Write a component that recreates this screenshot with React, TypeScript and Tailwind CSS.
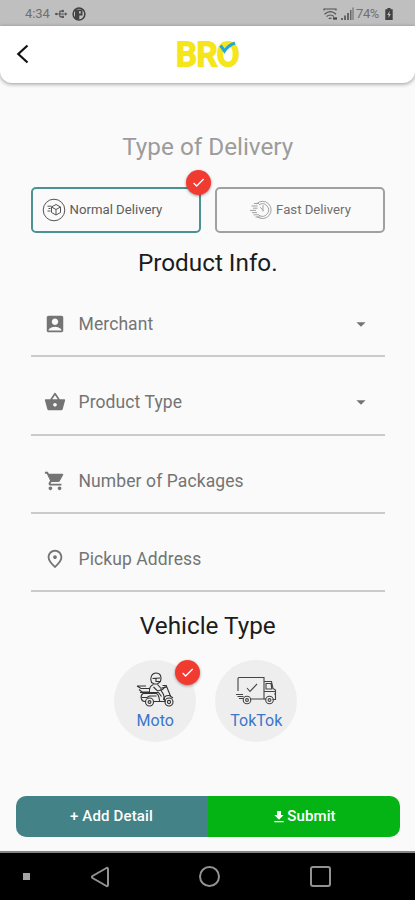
import { useState, ReactNode } from "react";
import {
  MdAccountBox,
  MdArrowDropDown,
  MdCheck,
  MdFileDownload,
  MdOutlinePlace,
  MdShoppingBasket,
  MdShoppingCart,
  MdUsb,
} from "react-icons/md";

function StatusBar() {
  return (
    <div className="flex h-[26px] items-center justify-between bg-[#bfbfbf] pl-[25px] pr-[22px] pt-px text-[13px] text-[#707070]">
      <div className="flex items-center">
        <span className="w-[26px] tracking-[-0.1px]">4:34</span>
        <MdUsb className="ml-[3px] size-[14px] rotate-90 text-[#555]" />
        <svg viewBox="0 0 14 14" className="ml-1 size-[14px]">
          <circle cx="7" cy="7" r="5.9" fill="none" stroke="#3f3f3f" strokeWidth="1.5" />
          <path d="M3 2.5h7.5v6H7.3v4H3z" fill="#444" />
          <path d="M7 4.2h1.8v2.4H7z" fill="#bfbfbf" />
        </svg>
      </div>
      <div className="flex items-center">
        <svg viewBox="0 0 16 14" className="h-[14px] w-4" fill="none" stroke="#505050" strokeWidth="1.2">
          <path d="M1 3.5V2h12v1.5M1.5 7.2q6-5 11.5 0M3.6 9.5q3.7-3 7.2 0M5.8 11.7q1.5-1.2 2.7 0" />
          <path d="M10 10.4h4v2.2h-4z" fill="#444" stroke="none" />
        </svg>
        <svg viewBox="0 0 13 13" className="ml-[2px] h-[13px] w-[13px]" fill="#666">
          <path d="M0 11h2v2H0zM3 8.5h2V13H3zM6 6h2v7H6zM9 3h1.5v10H9zM11.5.5h1V13h-1z" />
        </svg>
        <span className="ml-[2px] w-[25px] tracking-[-0.4px]">74%</span>
        <svg viewBox="0 0 8 13" className="ml-[4px] h-[12px] w-2">
          <path d="M2.3 0h3.4v1.3H8V13H0V1.3h2.3z" fill="#414141" />
          <path d="M4.7 3 2 7.5h1.7L3.3 11 6 6.5H4.3z" fill="#bfbfbf" />
        </svg>
      </div>
    </div>
  );
}

function Header() {
  return (
    <header className="relative flex h-[57px] items-center justify-center rounded-b-xl bg-white shadow-[0_1px_4px_rgba(0,0,0,0.4)]">
      <button className="absolute left-[16px] top-[18px]" aria-label="Back">
        <svg viewBox="0 0 14 20" className="h-5 w-[14px]" fill="none" stroke="#111" strokeWidth="2.2">
          <path d="M11.5 1.5 2.3 10l9.2 8.5" />
        </svg>
      </button>
      <div className="relative flex h-[28px] w-[64px] items-center justify-center">
        <span className="text-[33px] font-medium leading-[28px] tracking-[-0.5px] text-[#f5e51b] [-webkit-text-stroke:2px_#f5e51b] [stroke-linejoin:round]">
          BRO
        </span>
        <svg
          viewBox="0 0 18 13"
          className="absolute right-[3px] top-0 h-[13px] w-[18px]"
          fill="none"
          stroke="#20a8dc"
          strokeWidth="3"
        >
          <path d="M1.5 4.5 5.5 10Q9 4.5 16 2" />
        </svg>
      </div>
    </header>
  );
}

function CheckBadge({ className }: { className: string }) {
  return (
    <span
      className={`absolute flex size-[25px] items-center justify-center rounded-full bg-[#f23b30] text-white shadow-[0_1px_3px_rgba(0,0,0,0.4)] ${className}`}
    >
      <MdCheck className="size-[15px]" />
    </span>
  );
}

function BoxIcon() {
  return (
    <svg viewBox="0 0 24 24" className="size-6" fill="none" stroke="#555" strokeWidth="1">
      <circle cx="12" cy="12" r="10.8" />
      <path d="m9.5 9 4.5-2.5L18.5 9v5.5L14 17l-4.5-2.5z" />
      <path d="m9.5 9 4.5 2.5L18.5 9M14 11.5V17M5.5 8.2h4M6.5 10.5h2M5.5 13h3" />
    </svg>
  );
}

function FastIcon() {
  return (
    <svg viewBox="0 0 24 20" className="h-5 w-6" fill="none" stroke="#999" strokeWidth="0.9">
      <path d="M7.5 3.8A8.6 8.6 0 1 1 8 16.5" />
      <path d="M10 4.8a6.2 6.2 0 1 1 0 10.4M14 5v5.2l-2.8-3M13.2 10.8h1.6" />
      <path d="M5 3.5h5M2.5 6h6M4 8.2h4.5M1 10.4h6M3 12.6h5M4.5 14.8H10M6.5 17h5" />
    </svg>
  );
}

function ScooterIcon() {
  return (
    <svg viewBox="0 0 40 36" className="h-9 w-10" fill="none" stroke="#333" strokeWidth="1.1">
      <path d="M16.5 10.5C14.5 5.5 17 1 21 1c4.5 0 6 4 4.5 8.5l-3 2.5h-3zM17.5 6.5l7.5-.5M21 6.5v3h4" />
      <path d="M18.5 12.5c-3 1-4.5 4.2-4 8h9l3 4M18.5 15l4 4 5-1.5 3-3M22.5 12.5l4 4.5M2 14l4 2.5h8.5M4 17.5l3 2.5h7M2 14h9M5 20.5h9" />
      <path d="M8 21.5h13c1.8 0 2.3 1.5 2.8 3.5l1 4.5h5.2l-1.5-7-3-5M27.5 13.5h3.7l4.5 11M26.5 16l5.5-1M10.5 29.5C5.5 30 5 23.5 8 21.5M18.5 29.5h8M7 25.5h5l2.5-1.5h7" />
      <circle cx="14.5" cy="30" r="4" />
      <circle cx="14.5" cy="30" r="1.4" />
      <circle cx="34" cy="30" r="4" />
      <circle cx="34" cy="30" r="1.6" />
      <path d="M28.5 28q.5-5 6-4.5l3.5 2.5" />
    </svg>
  );
}

function TruckIcon() {
  return (
    <svg viewBox="0 0 42 30" className="h-[30px] w-[42px]" fill="none" stroke="#444" strokeWidth="1.1">
      <path d="M3 15V2.5Q3 1.5 4 1.5h25V23H15M12 12l3 3.5L22 8" />
      <path d="M29 5.5h7.5l1.5 7 2.5 1.5v9.5h-3M29 23h2M31 7.5h5l.8 5.5H31zM29 15.5h11.5M39 18h2M1 18.5h7M2.5 20.5h6M4 22.5h4" />
      <circle cx="12" cy="24" r="3.8" />
      <circle cx="12" cy="24" r="1.4" />
      <circle cx="34.5" cy="24" r="3.8" />
      <circle cx="34.5" cy="24" r="1.4" />
    </svg>
  );
}

interface FieldProps {
  icon: ReactNode;
  label: string;
  dropdown?: boolean;
}

function Field({ icon, label, dropdown }: FieldProps) {
  return (
    <div className="flex h-[78.3px] items-center border-b-2 border-[#cbcbcb] pl-[13px] pr-[13px] pt-[14px] text-[#747474]">
      <span className="text-[22px]">{icon}</span>
      <span className="ml-[13px] flex-1 text-[17.5px] tracking-[0.1px]">{label}</span>
      {dropdown && <MdArrowDropDown className="size-[22px]" />}
    </div>
  );
}

function App() {
  const [delivery, setDelivery] = useState("normal");
  const [vehicle, setVehicle] = useState("moto");

  const deliveryStyle =
    "relative flex h-[46px] w-[170px] items-center rounded-[5px] border-2 text-[13.2px]";
  const vehicleStyle =
    "relative flex size-[82px] flex-col items-center rounded-full bg-[#eee] text-[16px] text-[#3b76cc]";

  return (
    <div className="flex h-[900px] w-[415px] flex-col bg-[#fafafa] font-[Roboto,sans-serif]">
      <StatusBar />
      <Header />
      <main className="flex flex-1 flex-col pl-[30.5px] pr-[30px]">
        <h2 className="mt-[48px] text-center text-[24.3px] leading-8 text-[#9c9c9c]">
          Type of Delivery
        </h2>
        <div className="mt-[24px] flex justify-between">
          <button
            className={`${deliveryStyle} border-[#4b9294] pl-[9px] text-[#5c5c5c]`}
            onClick={() => setDelivery("normal")}
          >
            <BoxIcon />
            <span className="ml-1">Normal Delivery</span>
            {delivery === "normal" && <CheckBadge className="-right-[12px] -top-[19px]" />}
          </button>
          <button
            className={`${deliveryStyle} justify-center border-[#a0a0a0] text-[#707070]`}
            onClick={() => setDelivery("fast")}
          >
            <FastIcon />
            <span className="ml-[3px]">Fast Delivery</span>
            {delivery === "fast" && <CheckBadge className="-right-[12px] -top-[19px]" />}
          </button>
        </div>
        <h2 className="mt-[14px] text-center text-[24.3px] leading-8 text-[#1c1c1c]">
          Product Info.
        </h2>
        <div>
          <Field icon={<MdAccountBox />} label="Merchant" dropdown />
          <Field icon={<MdShoppingBasket />} label="Product Type" dropdown />
          <Field icon={<MdShoppingCart />} label="Number of Packages" />
          <Field icon={<MdOutlinePlace />} label="Pickup Address" />
        </div>
        <h2 className="mt-[17.5px] text-center text-[24.3px] leading-8 text-[#1c1c1c]">
          Vehicle Type
        </h2>
        <div className="mt-[18px] flex justify-center gap-[19px] pr-[4px]">
          <button className={vehicleStyle} onClick={() => setVehicle("moto")}>
            <span className="mt-[12px] h-[37px]">
              <ScooterIcon />
            </span>
            <span className="leading-6">Moto</span>
            {vehicle === "moto" && <CheckBadge className="-right-[4px] top-0" />}
          </button>
          <button className={vehicleStyle} onClick={() => setVehicle("toktok")}>
            <span className="mt-[16px] h-[33px]">
              <TruckIcon />
            </span>
            <span className="leading-6">TokTok</span>
            {vehicle === "toktok" && <CheckBadge className="-right-[4px] top-0" />}
          </button>
        </div>
      </main>
      <div className="mx-[15.5px] mb-[14px] flex h-[41px] overflow-hidden rounded-[10px] text-[15px] font-medium text-white">
        <button className="flex-1 bg-[#438287] tracking-[0.15px]">+ Add Detail</button>
        <button className="flex flex-1 items-center justify-center bg-[#04b414] tracking-[0.1px]">
          <MdFileDownload className="size-[16px]" />
          Submit
        </button>
      </div>
      <nav className="flex h-[49px] items-center border-t-2 border-[#858585] bg-black">
        <span className="ml-[23px] size-[7px] bg-[#a5a5a5]" />
        <svg viewBox="0 0 20 22" className="ml-[60px] h-[22px] w-5" fill="none" stroke="#929292" strokeWidth="2" strokeLinejoin="round">
          <path d="M16.5 2q1.5-.5 1.5 1v16q0 1.5-1.5 1L2.5 12q-1-1 0-2z" />
        </svg>
        <span className="ml-[89px] size-[21px] rounded-full border-2 border-[#929292]" />
        <span className="ml-[90px] size-[21px] rounded-[3px] border-2 border-[#929292]" />
      </nav>
    </div>
  );
}

export default App;
